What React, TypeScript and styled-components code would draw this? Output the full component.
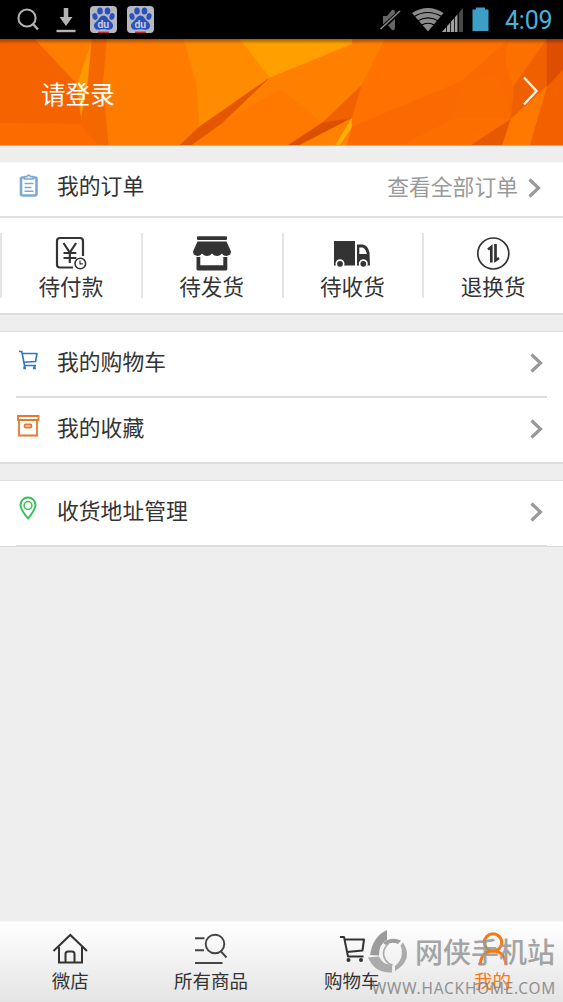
import React from "react";
import styled, { createGlobalStyle } from "styled-components";

const Global = createGlobalStyle`
  * { box-sizing: border-box; }
  body { margin: 0; background: #eee; }
  svg { display: block; flex: none; }
`;

const Screen = styled.div`
  position: relative;
  display: flex;
  flex-direction: column;
  width: 563px;
  height: 1002px;
  overflow: hidden;
  background: #eee;
  color: #333;
  font-family: Roboto, "Noto Sans CJK SC", sans-serif;
  white-space: nowrap;
`;

const StatusBar = styled.header`
  display: flex;
  align-items: center;
  justify-content: space-between;
  height: 39px;
  background: #000;
`;

const Clock = styled.time`
  width: 58px;
  font-size: 25px;
  line-height: 39px;
  letter-spacing: -0.2px;
  color: #47b3dc;
  padding-top: 1px;
`;

const StatusGroup = styled.div`
  display: flex;
  height: 39px;
`;

const Banner = styled.section`
  display: grid;
  height: 107px;
  border-bottom: 1px solid #f9a565;
  & > * { grid-area: 1 / 1; }
`;

const BannerContent = styled.div`
  z-index: 1;
  display: flex;
  align-items: center;
  justify-content: space-between;
  padding: 2px 24px 0 41px;
  font-size: 24.6px;
  color: #fff;
  svg { margin-bottom: 4px; }
`;

const Card = styled.section<{ $gap: number }>`
  margin-top: ${(p) => p.$gap}px;
  background: #fff;
  border-top: 1px solid #ddd;
  border-bottom: 2px solid #dcdcdc;
`;

const OrdersCard = styled(Card)`
  border-top-color: #f7f7f7;
`;

const AddressCard = styled(Card)`
  border-bottom-width: 1px;
`;

const Row = styled.div<{ $height: number }>`
  display: flex;
  align-items: center;
  height: ${(p) => p.$height}px;
  padding: 0 20px 3px 16px;
`;

const OrdersHeader = styled(Row)`
  padding-bottom: 4px;
  padding-right: 22px;
  border-bottom: 2px solid #e0e0e0;
`;

const RowIcon = styled.span`
  width: 41px;
  padding-bottom: 3px;
`;

const RowLabel = styled.span`
  flex: 1;
  font-size: 21.8px;
  line-height: 30px;
`;

const OrdersLabel = styled(RowLabel)`
  padding-bottom: 2px;
`;

const RowNote = styled.span`
  margin: 1px 10px 0 0;
  font-size: 21.8px;
  line-height: 30px;
  color: #999;
`;

const Divider = styled.div<{ $height: number }>`
  height: ${(p) => p.$height}px;
  margin: 0 16px;
  background: #dcdcdc;
`;

const StatusGrid = styled.div`
  display: grid;
  grid-template-columns: repeat(4, 1fr);
  height: 95px;
  padding-top: 15px;
`;

const OrderStatus = styled.div`
  display: flex;
  flex-direction: column;
  align-items: center;
  height: 65px;
  border-left: 2px solid #e4e4e4;
  padding-right: 1px;
  font-size: 21.6px;
  line-height: 34px;
`;

const Nav = styled.nav`
  display: grid;
  grid-template-columns: repeat(4, 1fr);
  height: 81px;
  margin-top: auto;
  border-top: 1px solid #f8f8f8;
  background: linear-gradient(#fff, #e4e4e4);
`;

const NavItem = styled.div<{ $active?: boolean }>`
  display: flex;
  flex-direction: column;
  align-items: center;
  padding-top: 8px;
  font-size: 18.5px;
  line-height: 31px;
  color: ${(p) => (p.$active ? "#f57a14" : "#333")};
`;

const Stamp = styled.div`
  position: absolute;
  left: 368px;
  top: 928px;
  display: grid;
  grid-template-columns: 47px 1fr;
  color: #858585;
  opacity: 0.88;
`;

const StampName = styled.span`
  font-size: 28px;
  font-weight: 500;
  line-height: 46px;
  color: #999;
  padding-top: 3px;
`;

const StampUrl = styled.span`
  grid-column: 1 / -1;
  padding-left: 4px;
  margin-top: 2px;
  font-family: "Noto Sans", sans-serif;
  font-size: 15.4px;
  line-height: 20px;
  letter-spacing: 0.8px;
`;

const FACETS: [string, string][] = [
  ["0,0 35,0 78,46 82,85 0,84", "#f56200"],
  ["0,84 82,85 101,107 0,107", "#fb6b00"],
  ["35,0 93,0 86,25 78,46", "#ff7d00"],
  ["92,2 88,43 82,85 77,46", "#ff9900"],
  ["92,0 108,0 103,45 109,107 100,107 80,85 88,43", "#f56800"],
  ["107,0 185,0 197,48 198,89 180,107 109,107 103,45", "#ff7c00"],
  ["184,0 241,0 270,39 199,89 197,48", "#ff8b00"],
  ["240,0 352,0 352,6 281,34 270,39", "#ffa000"],
  ["270,39 352,5 386,0 362,46 322,84 288,107 188,107 222,84", "#ff8000"],
  ["222,84 281,50 322,84 288,107 188,107", "#ff7800"],
  ["268,40 222,84 190,107 179,107 199,88", "#e45700"],
  ["362,46 322,84 352,79", "#f06200"],
  ["322,84 352,79 300,107 287,107", "#da5000"],
  ["352,79 352,107 298,107", "#ff8100"],
  ["352,79 352,88 339,107 335,107", "#ffb000"],
  ["385,0 509,0 462,42 352,88 352,79 362,46", "#ff7100"],
  ["509,0 505,21 513,48 511,80 453,80 400,107 347,107 352,88 462,42", "#fa6a00"],
  ["462,42 498,37 511,80 453,80", "#fb6c00"],
  ["400,107 453,80 511,80 470,107", "#fc6e00"],
  ["470,107 511,80 503,107", "#e75900"],
  ["508,0 548,0 514,47 505,21", "#fc7000"],
  ["547,0 547,48 511,80 514,47", "#f16000"],
  ["547,0 563,0 563,31 547,48", "#dd4e00"],
  ["547,47 530,107 502,107 511,80", "#ff7900"],
  ["547,48 563,31 563,107 530,107", "#f26000"],
];

const Polygons = () => (
  <svg width="563" height="106" viewBox="0 0 563 106">
    <defs>
      <linearGradient id="edge" x1="0" y1="0" x2="0" y2="1">
        <stop offset="0" stopColor="#4a1c00" stopOpacity=".5" />
        <stop offset="1" stopColor="#4a1c00" stopOpacity="0" />
      </linearGradient>
    </defs>
    <rect width="563" height="106" fill="#ff7600" />
    {FACETS.map(([points, fill]) => (
      <polygon key={points} points={points} fill={fill} stroke={fill} strokeWidth=".4" />
    ))}
    <rect width="563" height="5" fill="url(#edge)" />
  </svg>
);

const Chevron = () => (
  <svg width="13" height="22" viewBox="0 0 13 22" fill="none" stroke="#999" strokeWidth="3.2">
    <path d="M1.5 2.500 10.500 11 1.500 19.500" />
  </svg>
);

const PawBadge = ({ x }: { x: number }) => (
  <g transform={`translate(${x} 6)`}>
    <rect width="27" height="27" rx="4" fill="#b5b8c0" />
    <g fill="#2851bd">
      <ellipse cx="10" cy="5" rx="2.8" ry="3.6" />
      <ellipse cx="17.5" cy="5" rx="2.8" ry="3.6" />
      <ellipse cx="5" cy="10.5" rx="2.5" ry="3.4" transform="rotate(-15 5 10.5)" />
      <ellipse cx="22" cy="10.5" rx="2.5" ry="3.4" transform="rotate(15 22 10.5)" />
      <path d="M13.5 9.5c3 0 4 3 6 5s4 3 3.500 6-3.500 3.500-5.500 3.200-5.500-.6-8 0-5-.8-5.500-3.200 1.500-4 3.500-6 3-5 6-5Z" />
    </g>
    <text x="13.300" y="21.800" textAnchor="middle" fontFamily="Roboto" fontSize="10.500" fontWeight="700" fill="#c8cce0">du</text>
    <path d="M8 26.300h11" stroke="#b5322e" strokeWidth="1.400" />
  </g>
);

const LeftStatusIcons = () => (
  <svg width="160" height="39" viewBox="0 0 160 39" fill="none" stroke="#b4b4b4">
    <circle cx="27" cy="18" r="8.600" strokeWidth="2" />
    <path d="m33 24 5 5.500" strokeWidth="2.400" />
    <path d="M66 8v10" strokeWidth="4.500" />
    <path d="M59.500 17h13L66 26Z" fill="#b4b4b4" stroke="none" />
    <path d="M56.500 31h19" strokeWidth="2.400" />
    <g stroke="none">
      <PawBadge x={90} />
      <PawBadge x={127} />
    </g>
  </svg>
);

const RightStatusIcons = () => (
  <svg width="126" height="39" viewBox="379 0 126 39" fill="none">
    <path d="M383 16h4l5-6q3-1 3 3v14q0 4-3 3l-5-6h-4Z" fill="#666" />
    <path d="M380.500 29.500 400 11.500" stroke="#000" strokeWidth="4" />
    <path d="M380.500 29 400 11" stroke="#888" strokeWidth="1.600" />
    <path d="M412 13q16-10 31.500 0L428 31.500Z" fill="#8a8a8a" />
    <path d="M413.500 17q14-9 29 0M417 21.300q11-7 22 0M421 25.500q7-4.500 14 0" stroke="#000" strokeWidth="1.200" />
    <path d="M463 8v24h-21Z" fill="#484848" />
    <path d="M457 15v17h-15Z" fill="#a0a0a0" />
    <path d="M446.500 26v6M450.500 21v11M454.500 16v16M458.500 11v21" stroke="#000" strokeWidth=".8" />
    <path d="M476 9.500V7.500h9v2h3.500V31h-16V9.500Z" fill="#3d9fc8" />
  </svg>
);

const ClipboardIcon = () => (
  <svg width="26" height="26" viewBox="16 173 26 26" fill="none" stroke="#7ca9d0">
    <rect x="21" y="177.500" width="15.500" height="18" rx="1.500" strokeWidth="2.600" />
    <path d="M24.500 179v-2.500h2.500q1.500-3 3.500 0H33v2.500Z" fill="#e4eef6" strokeWidth="1.500" />
    <path d="M24.500 183.500h9M24.500 187.500h7M24.500 191.300h9" strokeWidth="1.500" />
  </svg>
);

const BlueCartIcon = () => (
  <svg width="26" height="26" viewBox="16 349 26 26" fill="none" stroke="#3078bd" strokeWidth="1.600" strokeLinejoin="round">
    <path d="M19 352.500h2.800l2.700 14h11.500M22.500 354.500h14.500l-1.500 8-11.500.8" />
    <path d="M23.300 369.300h2.800M33 369.300h2.800M24.500 367v2M34.500 367v2" strokeWidth="2" />
  </svg>
);

const BoxIcon = () => (
  <svg width="26" height="26" viewBox="16 415 26 26" fill="none" stroke="#e6792d" strokeWidth="1.800">
    <path d="M18 417h20.500v4H18ZM19 421v15.500h18V421" />
    <rect x="24.500" y="425.500" width="7" height="3" rx="1.500" />
  </svg>
);

const PinIcon = () => (
  <svg width="26" height="28" viewBox="16 497 26 28" fill="none" stroke="#36bf54" strokeWidth="1.900">
    <path d="M28 519.500q-7.500-9-7.500-13.500a7.500 7.500 0 0 1 15 0q0 4.500-7.500 13.500Z" />
    <circle cx="28" cy="506.500" r="3.900" strokeWidth="1.500" />
  </svg>
);

const PayIcon = () => (
  <svg width="40" height="38" viewBox="51 233 40 38" fill="none" stroke="#333" strokeWidth="2.200">
    <path d="M73 267.500H60q-3 0-3-3V241q0-3 3-3h20q3 0 3 3v15" />
    <path d="m63.500 243 6.300 9.500 6.300-9.500M69.800 252v11M63.500 253h12.800M63.500 258h12.800" />
    <circle cx="80.300" cy="263.500" r="5.300" strokeWidth="1.600" />
    <path d="M80 260.500v3.300h3" strokeWidth="1.200" />
  </svg>
);

const ShopIcon = () => (
  <svg width="40" height="38" viewBox="192 233 40 38" fill="#333">
    <rect x="197" y="236.300" width="30" height="3.700" rx="1" />
    <path d="M197.500 241.500h29l4.500 10q0 4-4.500 4.500-3.500 0-4.500-2.500-2 2.500-5 2.500t-5-2.500q-2 2.500-5 2.500t-5-2.500q-1.500 2.500-4.500 2.500-4.500-.5-4.500-4.500Z" />
    <path d="M196.500 257h3.800v8.200h23v-8.200h4v12q0 1.500-1.500 1.500H198q-1.500 0-1.500-1.500Z" />
  </svg>
);

const TruckIcon = () => (
  <svg width="40" height="38" viewBox="333 233 40 38">
    <path d="M335 241h21v24.500h-21ZM358 244.500h6q5 1 6.500 8l.5 13h-13Z" fill="#333" />
    <path d="M360.300 247.500h3.500q3.200 1.500 4 6.500h-7.500Z" fill="#fff" />
    <g fill="#333" stroke="#fff" strokeWidth="1.600">
      <circle cx="341" cy="263.800" r="3.700" />
      <circle cx="364.300" cy="263.800" r="3.700" />
    </g>
  </svg>
);

const ReturnIcon = () => (
  <svg width="40" height="38" viewBox="473 233 40 38" fill="none" stroke="#333">
    <circle cx="493.300" cy="253.500" r="15.500" strokeWidth="1.700" />
    <path d="M491.300 262.500V247l-3.300 2.500M495.500 244v16.500l3.500-2.500" strokeWidth="2.700" />
  </svg>
);

const HomeIcon = () => (
  <svg width="40" height="37" viewBox="50 931 40 37" fill="none" stroke="#333" strokeWidth="2">
    <path d="M53.500 952 70.300 936 87 952M59 948v15.500h23V948" />
    <path d="M65.500 963v-8q0-2.500 2.500-2.500h4q2.500 0 2.500 2.500v8" />
  </svg>
);

const SearchListIcon = () => (
  <svg width="40" height="37" viewBox="192 931 40 37" fill="none" stroke="#444" strokeWidth="1.900">
    <path d="M196 939.300h9.500M196 951.300h9M196 964h27.500M221.500 952l6 6.500" />
    <circle cx="216" cy="945" r="9.300" />
  </svg>
);

const CartIcon = () => (
  <svg width="40" height="37" viewBox="331 931 40 37" fill="none" stroke="#333" strokeWidth="2" strokeLinejoin="round">
    <path d="M339 938h4l4 19.500h15.500M344 940.500h19l-1.500 11-15.500 1.500" />
    <g fill="#333" stroke="none">
      <circle cx="347.500" cy="961" r="2" />
      <circle cx="360" cy="961" r="2" />
    </g>
  </svg>
);

const UserIcon = () => (
  <svg width="40" height="37" viewBox="473 931 40 37" fill="none" stroke="#f57a14" strokeWidth="3">
    <circle cx="493" cy="943.500" r="8.700" />
    <path d="M480 966q1.500-14 13-14t13 14" />
  </svg>
);

const SwirlLogo = () => (
  <svg width="47" height="46" viewBox="368 928 47 46">
    <path d="M387 930q-14 6-17 25l9 .5q0-12 8-15.500Z" fill="#8f8f8f" />
    <path d="M368 957.500l11-1q4 9 13 8v8q-17 1-24-15Z" fill="#a2a2a2" />
    <path d="M383 943q8-7 18-2.500l-3 3.500q-6-3-12 1Z" fill="#929292" />
    <path d="M403 942.500q11 17-8 28.500v-5q10-8 5.500-20.500Z" fill="#a2a2a2" />
    <path d="M389 943q-9 8-3.500 17 2.500 4 7 5" fill="none" stroke="#a2a2a2" strokeWidth="1.500" />
  </svg>
);

const STATUSES = [
  { label: "待付款", icon: <PayIcon /> },
  { label: "待发货", icon: <ShopIcon /> },
  { label: "待收货", icon: <TruckIcon /> },
  { label: "退换货", icon: <ReturnIcon /> },
];

const TABS = [
  { label: "微店", icon: <HomeIcon /> },
  { label: "所有商品", icon: <SearchListIcon /> },
  { label: "购物车", icon: <CartIcon /> },
  { label: "我的", icon: <UserIcon />, active: true },
];

const LinkRow = ({ icon, label, height }: { icon: React.ReactNode; label: string; height: number }) => (
  <Row $height={height}>
    <RowIcon>{icon}</RowIcon>
    <RowLabel>{label}</RowLabel>
    <Chevron />
  </Row>
);

export default function App() {
  return (
    <Screen>
      <Global />
      <StatusBar>
        <LeftStatusIcons />
        <StatusGroup>
          <RightStatusIcons />
          <Clock>4:09</Clock>
        </StatusGroup>
      </StatusBar>
      <Banner>
        <Polygons />
        <BannerContent>
          <span>请登录</span>
          <svg width="17" height="30" viewBox="0 0 17 30" fill="none" stroke="#fff3e6" strokeWidth="2.400">
            <path d="M2 1.500 14.500 15 2 28.500" />
          </svg>
        </BannerContent>
      </Banner>
      <OrdersCard $gap={16}>
        <OrdersHeader $height={55}>
          <RowIcon><ClipboardIcon /></RowIcon>
          <OrdersLabel>我的订单</OrdersLabel>
          <RowNote>查看全部订单</RowNote>
          <Chevron />
        </OrdersHeader>
        <StatusGrid>
          {STATUSES.map(({ label, icon }) => (
            <OrderStatus key={label}>
              {icon}
              {label}
            </OrderStatus>
          ))}
        </StatusGrid>
      </OrdersCard>
      <Card $gap={16}>
        <LinkRow icon={<BlueCartIcon />} label="我的购物车" height={64} />
        <Divider $height={2} />
        <LinkRow icon={<BoxIcon />} label="我的收藏" height={64} />
      </Card>
      <AddressCard $gap={16}>
        <LinkRow icon={<PinIcon />} label="收货地址管理" height={64} />
        <Divider $height={1} />
      </AddressCard>
      <Nav>
        {TABS.map(({ label, icon, active }) => (
          <NavItem key={label} $active={active}>
            {icon}
            {label}
          </NavItem>
        ))}
      </Nav>
      <Stamp>
        <SwirlLogo />
        <StampName>网侠手机站</StampName>
        <StampUrl>WWW.HACKHOME.COM</StampUrl>
      </Stamp>
    </Screen>
  );
}
